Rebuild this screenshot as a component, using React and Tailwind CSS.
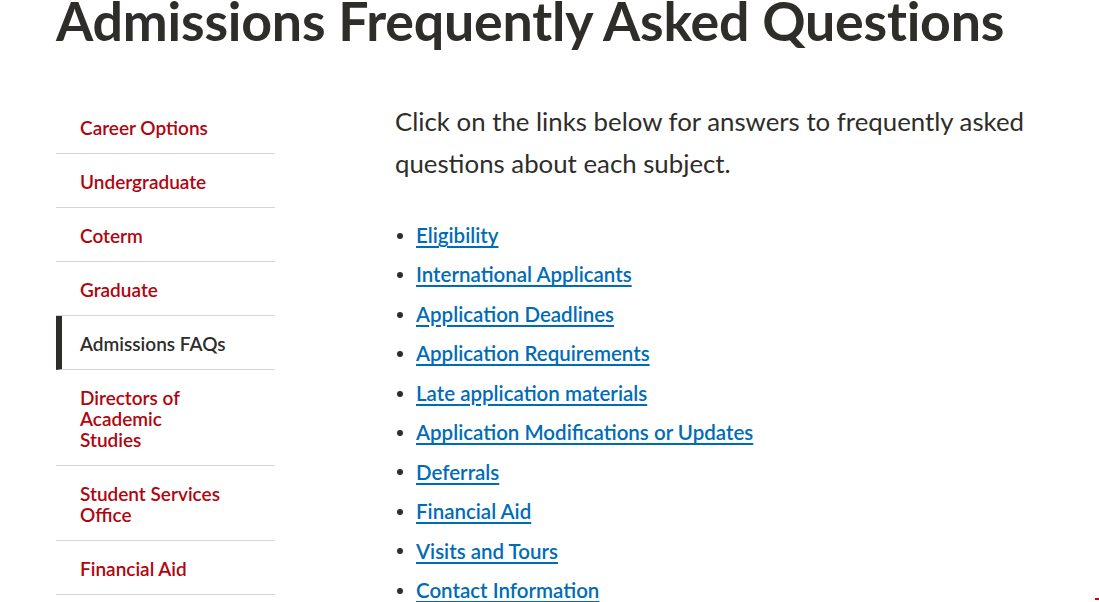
import React from 'react'

const navItems = [
  { lines: ['Career Options'] },
  { lines: ['Undergraduate'] },
  { lines: ['Coterm'] },
  { lines: ['Graduate'] },
  { lines: ['Admissions FAQs'], active: true },
  { lines: ['Directors of', 'Academic', 'Studies'] },
  { lines: ['Student Services', 'Office'] },
  { lines: ['Financial Aid'] },
]

const faqLinks = [
  'Eligibility',
  'International Applicants',
  'Application Deadlines',
  'Application Requirements',
  'Late application materials',
  'Application Modifications or Updates',
  'Deferrals',
  'Financial Aid',
  'Visits and Tours',
  'Contact Information',
]

export default function App() {
  return (
    <div className="relative h-[602px] overflow-hidden bg-white font-['Lato',sans-serif] text-[#2e2d29]">
      <h1 className="-mt-[4px] pl-[56px] text-[53.7px] font-bold leading-[48px] tracking-[-0.2px]">
        Admissions Frequently Asked Questions
      </h1>
      <div className="mt-[56px] flex pl-[56px]">
        <nav className="w-[219px] shrink-0">
          <ul className="list-none p-0">
            {navItems.map((item) => (
              <li
                key={item.lines.join(' ')}
                className={
                  'border-b border-[#d5d5d4] pt-[17px] pb-[15px] pr-6 text-[19px] font-semibold leading-[21px] ' +
                  (item.active ? 'border-l-[6px] border-l-[#2e2d29] pl-[18px] text-[#2e2d29]' : 'pl-6 text-[#b1040e]')
                }
              >
                <a href="#" className="no-underline">
                  {item.lines.map((line) => (
                    <span key={line} className="block">{line}</span>
                  ))}
                </a>
              </li>
            ))}
          </ul>
        </nav>
        <main className="ml-[120px] w-[650px]">
          <p className="text-[25.8px] leading-[42px]">
            Click on the links below for answers to frequently asked questions about each subject.
          </p>
          <ul className="mt-[32px] list-none p-0">
            {faqLinks.map((l) => (
              <li key={l} className="flex items-center text-[20.5px] leading-[39.45px]">
                <span className="mr-[13px] ml-[2px] inline-block h-[6px] w-[6px] rounded-full bg-[#2e2d29]" />
                <a
                  href="#"
                  className="font-semibold text-[#006cb8] underline decoration-2 underline-offset-[3px]"
                >
                  {l}
                </a>
              </li>
            ))}
          </ul>
        </main>
      </div>
      <span className="absolute right-0 bottom-[2px] h-[2px] w-[4px] bg-[#d00000]" />
    </div>
  )
}
